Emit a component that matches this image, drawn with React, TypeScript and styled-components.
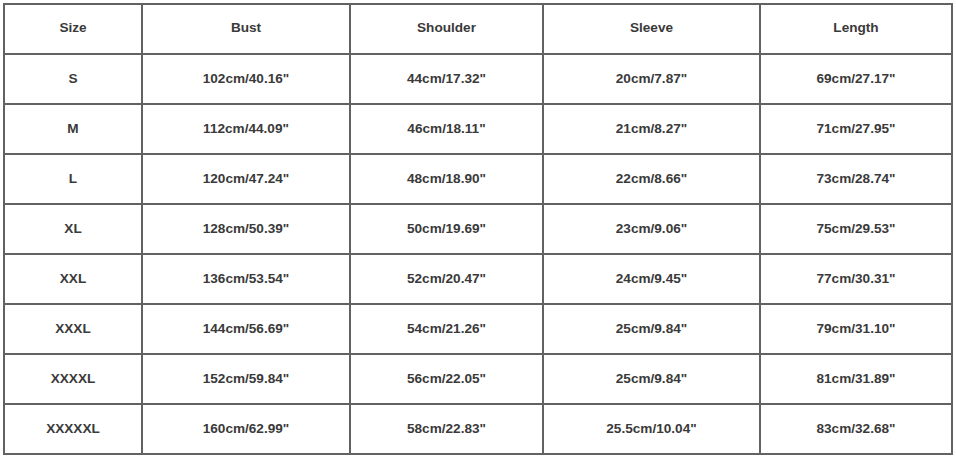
import React from "react";
import styled, { createGlobalStyle } from "styled-components";

const GlobalStyle = createGlobalStyle`
  html, body {
    margin: 0;
    padding: 0;
    background: #ffffff;
  }
`;

const columns = [
  { key: "size", title: "Size", width: 138 },
  { key: "bust", title: "Bust", width: 208 },
  { key: "shoulder", title: "Shoulder", width: 193 },
  { key: "sleeve", title: "Sleeve", width: 217 },
  { key: "length", title: "Length", width: 192 },
];

const rows = [
  ["S", "102cm/40.16\"", "44cm/17.32\"", "20cm/7.87\"", "69cm/27.17\""],
  ["M", "112cm/44.09\"", "46cm/18.11\"", "21cm/8.27\"", "71cm/27.95\""],
  ["L", "120cm/47.24\"", "48cm/18.90\"", "22cm/8.66\"", "73cm/28.74\""],
  ["XL", "128cm/50.39\"", "50cm/19.69\"", "23cm/9.06\"", "75cm/29.53\""],
  ["XXL", "136cm/53.54\"", "52cm/20.47\"", "24cm/9.45\"", "77cm/30.31\""],
  ["XXXL", "144cm/56.69\"", "54cm/21.26\"", "25cm/9.84\"", "79cm/31.10\""],
  ["XXXXL", "152cm/59.84\"", "56cm/22.05\"", "25cm/9.84\"", "81cm/31.89\""],
  ["XXXXXL", "160cm/62.99\"", "58cm/22.83\"", "25.5cm/10.04\"", "83cm/32.68\""],
];

export default function App() {
  return (
    <Page>
      <GlobalStyle />
      <Table>
        <colgroup>
          {columns.map((c) => (
            <col key={c.key} style={{ width: c.width }} />
          ))}
        </colgroup>
        <thead>
          <tr>
            {columns.map((c) => (
              <Cell as="th" key={c.key} $head>
                {c.title}
              </Cell>
            ))}
          </tr>
        </thead>
        <tbody>
          {rows.map((row) => (
            <tr key={row[0]}>
              {row.map((value, i) => (
                <Cell key={i}>{value}</Cell>
              ))}
            </tr>
          ))}
        </tbody>
      </Table>
    </Page>
  );
}

const Page = styled.div`
  width: 956px;
  height: 457px;
  padding: 3px 0 0 3px;
  box-sizing: border-box;
  background: #ffffff;
`;

const Table = styled.table`
  border-collapse: collapse;
  table-layout: fixed;
  width: 950px;
  font-family: "Liberation Sans", Arial, sans-serif;
  font-size: 13.6px;
  color: #3a3a3a;
`;

const Cell = styled.td<{ $head?: boolean }>`
  height: ${({ $head }) => ($head ? "44px" : "46px")};
  padding: 0 0 ${({ $head }) => ($head ? "4px" : "2px")} 0;
  border: 2px solid #626262;
  text-align: center;
  vertical-align: middle;
  font-weight: 700;
  white-space: nowrap;
`;
